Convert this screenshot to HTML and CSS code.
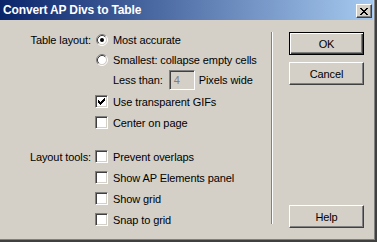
FILE: index.html
```html
<!DOCTYPE html>
<html>
<head>
<meta charset="utf-8">
<link rel="stylesheet" href="styles.css">
</head>
<body>
<div class="window">
  <div class="titlebar">
    <span class="title">Convert AP Divs to Table</span>
    <span class="close">
      <svg width="8" height="7" viewBox="0 0 8 7" shape-rendering="crispEdges">
        <rect x="0" y="0" width="2" height="1"/><rect x="6" y="0" width="2" height="1"/>
        <rect x="1" y="1" width="2" height="1"/><rect x="5" y="1" width="2" height="1"/>
        <rect x="2" y="2" width="4" height="1"/>
        <rect x="3" y="3" width="2" height="1"/>
        <rect x="2" y="4" width="4" height="1"/>
        <rect x="1" y="5" width="2" height="1"/><rect x="5" y="5" width="2" height="1"/>
        <rect x="0" y="6" width="2" height="1"/><rect x="6" y="6" width="2" height="1"/>
      </svg>
    </span>
  </div>
  <div class="body">
    <div class="form">
      <div class="row h20">
        <span class="lbl">Table layout:</span>
        <span class="ctl">
          <svg class="radio" width="12" height="12" viewBox="0 0 12 12">
            <circle cx="6" cy="6" r="4.2" fill="#fff"/>
            <path d="M2.11 9.89A5.5 5.5 0 0 1 9.89 2.11" stroke="#808080" fill="none"/>
            <path d="M9.89 2.11A5.5 5.5 0 0 1 2.11 9.89" stroke="#fff" fill="none"/>
            <path d="M2.82 9.18A4.5 4.5 0 0 1 9.18 2.82" stroke="#404040" fill="none"/>
            <path d="M9.18 2.82A4.5 4.5 0 0 1 2.82 9.18" stroke="#d4d0c8" fill="none"/>
            <circle cx="6" cy="6" r="2" fill="#000"/>
          </svg>
          <span>Most accurate</span>
        </span>
      </div>
      <div class="row h20">
        <span class="lbl"></span>
        <span class="ctl">
          <svg class="radio" width="12" height="12" viewBox="0 0 12 12">
            <circle cx="6" cy="6" r="4.2" fill="#fff"/>
            <path d="M2.11 9.89A5.5 5.5 0 0 1 9.89 2.11" stroke="#808080" fill="none"/>
            <path d="M9.89 2.11A5.5 5.5 0 0 1 2.11 9.89" stroke="#fff" fill="none"/>
            <path d="M2.82 9.18A4.5 4.5 0 0 1 9.18 2.82" stroke="#404040" fill="none"/>
            <path d="M9.18 2.82A4.5 4.5 0 0 1 2.82 9.18" stroke="#d4d0c8" fill="none"/>
          </svg>
          <span>Smallest: collapse empty cells</span>
        </span>
      </div>
      <div class="row">
        <span class="lbl"></span>
        <span class="ctl sub">
          <span>Less than:</span>
          <span class="field">4</span>
          <span>Pixels wide</span>
        </span>
      </div>
      <div class="row">
        <span class="lbl"></span>
        <span class="ctl">
          <span class="check">
            <svg width="7" height="7" viewBox="0 0 7 7" shape-rendering="crispEdges">
              <rect x="0" y="2" width="1" height="3"/><rect x="1" y="3" width="1" height="3"/>
              <rect x="2" y="4" width="1" height="3"/><rect x="3" y="3" width="1" height="3"/>
              <rect x="4" y="2" width="1" height="3"/><rect x="5" y="1" width="1" height="3"/>
              <rect x="6" y="0" width="1" height="3"/>
            </svg>
          </span>
          <span>Use transparent GIFs</span>
        </span>
      </div>
      <div class="row">
        <span class="lbl"></span>
        <span class="ctl"><span class="check"></span><span>Center on page</span></span>
      </div>

      <div class="row group2">
        <span class="lbl">Layout tools:</span>
        <span class="ctl"><span class="check"></span><span>Prevent overlaps</span></span>
      </div>
      <div class="row">
        <span class="lbl"></span>
        <span class="ctl"><span class="check"></span><span>Show AP Elements panel</span></span>
      </div>
      <div class="row">
        <span class="lbl"></span>
        <span class="ctl"><span class="check"></span><span>Show grid</span></span>
      </div>
      <div class="row">
        <span class="lbl"></span>
        <span class="ctl"><span class="check"></span><span>Snap to grid</span></span>
      </div>
    </div>
    <div class="sep"></div>
    <div class="buttons">
      <div class="btn default">OK</div>
      <div class="btn">Cancel</div>
      <div class="btn help">Help</div>
    </div>
  </div>
</div>
</body>
</html>
```
FILE: styles.css
```css
body {
  margin: 0;
  background: #d4d0c8;
  font-family: "Liberation Sans", Arial, sans-serif;
  font-size: 11px;
  letter-spacing: -0.1px;
  color: #000;
}

.window {
  width: 377px;
  height: 242px;
  box-sizing: border-box;
  background: #d4d0c8;
  border-right: 2px solid #404040;
  border-bottom: 2px solid #404040;
  padding: 0 2px 2px 0;
  box-shadow: inset -1px -1px #808080;
  display: flex;
  flex-direction: column;
}

.titlebar {
  height: 20px;
  flex: none;
  display: flex;
  align-items: center;
  background: linear-gradient(to right, #0a246a, #a6caf0);
  padding: 0 1px 0 3px;
}

.title {
  flex: 1;
  color: #fff;
  font-weight: bold;
  font-size: 12px;
  letter-spacing: -0.15px;
  white-space: nowrap;
}

.close {
  width: 16px;
  height: 14px;
  box-sizing: border-box;
  margin-top: 2px;
  background: #d4d0c8;
  border: 1px solid;
  border-color: #fff #404040 #404040 #fff;
  box-shadow: inset -1px -1px #808080;
  display: flex;
  align-items: center;
  justify-content: center;
}

.close svg {
  display: block;
  fill: #000;
}

.body {
  flex: 1;
  display: flex;
}

.form {
  width: 271px;
  padding-top: 10px;
  box-sizing: border-box;
}

.row {
  display: grid;
  grid-template-columns: 91px 1fr;
  column-gap: 4px;
  align-items: center;
  height: 21px;
}

.row.h20 {
  height: 20px;
}

.row.group2 {
  margin-top: 13px;
}

.lbl {
  text-align: right;
  white-space: nowrap;
}

.ctl {
  display: flex;
  align-items: center;
  white-space: nowrap;
}

.radio {
  display: block;
  flex: none;
  margin-left: 1px;
  margin-right: 5px;
}

.check {
  width: 13px;
  height: 13px;
  flex: none;
  box-sizing: border-box;
  background: #fff;
  border: 1px solid;
  border-color: #808080 #fff #fff #808080;
  box-shadow: inset 1px 1px #404040, inset -1px -1px #d4d0c8;
  margin-right: 5px;
  display: flex;
  align-items: center;
  justify-content: center;
}

.check svg {
  display: block;
  fill: #000;
}

.sub {
  padding-left: 18px;
  align-self: start;
  height: 20px;
}

.field {
  width: 26px;
  height: 20px;
  box-sizing: border-box;
  margin: 0 4px 0 6px;
  padding-left: 4px;
  border: 1px solid;
  border-color: #808080 #fff #fff #808080;
  box-shadow: inset 1px 1px #404040, inset -1px -1px #d4d0c8;
  color: #808080;
  display: flex;
  align-items: center;
}

.sep {
  width: 0;
  border-left: 1px solid #808080;
  border-right: 1px solid #fff;
  margin: 12px 0 14px;
}

.buttons {
  display: flex;
  flex-direction: column;
  padding: 12px 9px 10px 16px;
}

.btn {
  width: 75px;
  height: 23px;
  box-sizing: border-box;
  display: flex;
  align-items: center;
  justify-content: center;
  border: 1px solid;
  border-color: #fff #404040 #404040 #fff;
  box-shadow: inset -1px -1px #808080;
}

.btn.default {
  border-color: #000;
  box-shadow: inset 1px 1px #fff, inset -1px -1px #404040, inset -2px -2px #808080;
}

.btn + .btn {
  margin-top: 7px;
}

.btn.help {
  margin-top: auto;
}
```
